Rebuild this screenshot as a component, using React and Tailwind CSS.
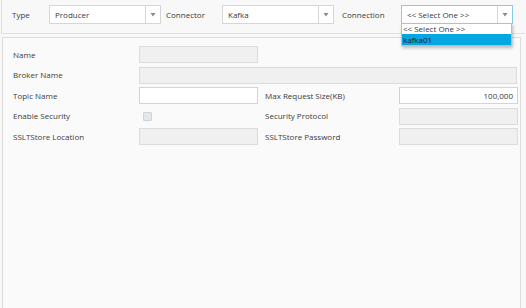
function Select({ value, focused, children }) {
  return (
    <div className="relative">
      <div
        className={`flex h-[19px] w-[112px] items-stretch border bg-white ${
          focused ? 'border-[#8cc8ea]' : 'border-[#d6d6d6]'
        }`}
      >
        <span className="flex flex-1 items-center pl-[5px] text-[8px] text-[#3a3a3a]">{value}</span>
        <span className="flex w-[15px] items-center justify-center border-l border-[#d6d6d6]">
          <svg width="6" height="4" viewBox="0 0 6 4">
            <path d="M0.5 0 L5.5 0 L3 3.5 Z" fill="#8a8a8a" />
          </svg>
        </span>
      </div>
      {children}
    </div>
  )
}

function Field({ white, wide, right, value }) {
  return (
    <div
      className={`flex h-[17px] items-center border px-[4px] text-[8px] text-[#3a3a3a] ${
        wide ? 'w-[378px]' : 'w-[119px]'
      } ${white ? 'bg-white border-[#d4d4d4]' : 'bg-[#f0f0f0] border-[#dcdcdc]'} ${
        right ? 'justify-end' : ''
      }`}
    >
      {value}
    </div>
  )
}

function Label({ children }) {
  return <span className="w-[126px] shrink-0 text-[8px] text-[#3a3a3a]">{children}</span>
}

export default function App() {
  return (
    <div className="h-[308px] w-[526px] overflow-hidden bg-[#f8f8f8] pl-[1px] font-['Open_Sans',sans-serif]">
      {/* Top bar */}
      <div className="relative z-10 flex h-[34px] w-[524px] items-start border-b border-l border-[#e0e0e0] pt-[5px]">
        <span className="w-[47px] pl-[10px] pt-[4px] text-[8px] text-[#3a3a3a]">Type</span>
        <Select value="Producer" />
        <span className="w-[61px] pl-[5px] pt-[4px] text-[8px] text-[#3a3a3a]">Connector</span>
        <Select value="Kafka" />
        <span className="w-[67px] pl-[8px] pt-[4px] text-[8px] text-[#3a3a3a]">Connection</span>
        <Select value="<< Select One >>" focused>
          <div className="absolute left-0 top-[18px] w-[111px] border border-[#bdbdbd] bg-white shadow-[1px_2px_3px_rgba(0,0,0,0.25)]">
            <div className="flex h-[10px] items-center pl-[1px] text-[8px] text-[#3a3a3a]">{'<< Select One >>'}</div>
            <div className="flex h-[11px] items-center bg-[#06a6e3] pl-[1px] text-[8px] text-[#1a1a1a]">kafka01</div>
          </div>
        </Select>
      </div>

      {/* Form panel */}
      <div className="ml-[1px] mt-[3px] h-[280px] w-[519px] border border-[#dcdcdc] bg-[#fafafa] pl-[10px] pt-[8px]">
        <div className="flex flex-col gap-[3.5px]">
          <div className="flex items-center">
            <Label>Name</Label>
            <Field />
          </div>
          <div className="flex items-center">
            <Label>Broker Name</Label>
            <Field wide />
          </div>
          <div className="flex items-center">
            <Label>Topic Name</Label>
            <Field white />
            <span className="w-[141px] pl-[7px] text-[8px] text-[#3a3a3a]">Max Request Size(KB)</span>
            <Field white right value="100,000" />
          </div>
          <div className="flex items-center">
            <Label>Enable Security</Label>
            <div className="flex h-[17px] w-[119px] items-center pl-[4px]">
              <span className="h-[9px] w-[9px] rounded-[1px] border border-[#d0d4d8] bg-[#e4e7ea]" />
            </div>
            <span className="w-[141px] pl-[7px] text-[8px] text-[#3a3a3a]">Security Protocol</span>
            <Field />
          </div>
          <div className="flex items-center">
            <Label>SSLTStore Location</Label>
            <Field />
            <span className="w-[141px] pl-[7px] text-[8px] text-[#3a3a3a]">SSLTStore Password</span>
            <Field />
          </div>
        </div>
      </div>
    </div>
  )
}
